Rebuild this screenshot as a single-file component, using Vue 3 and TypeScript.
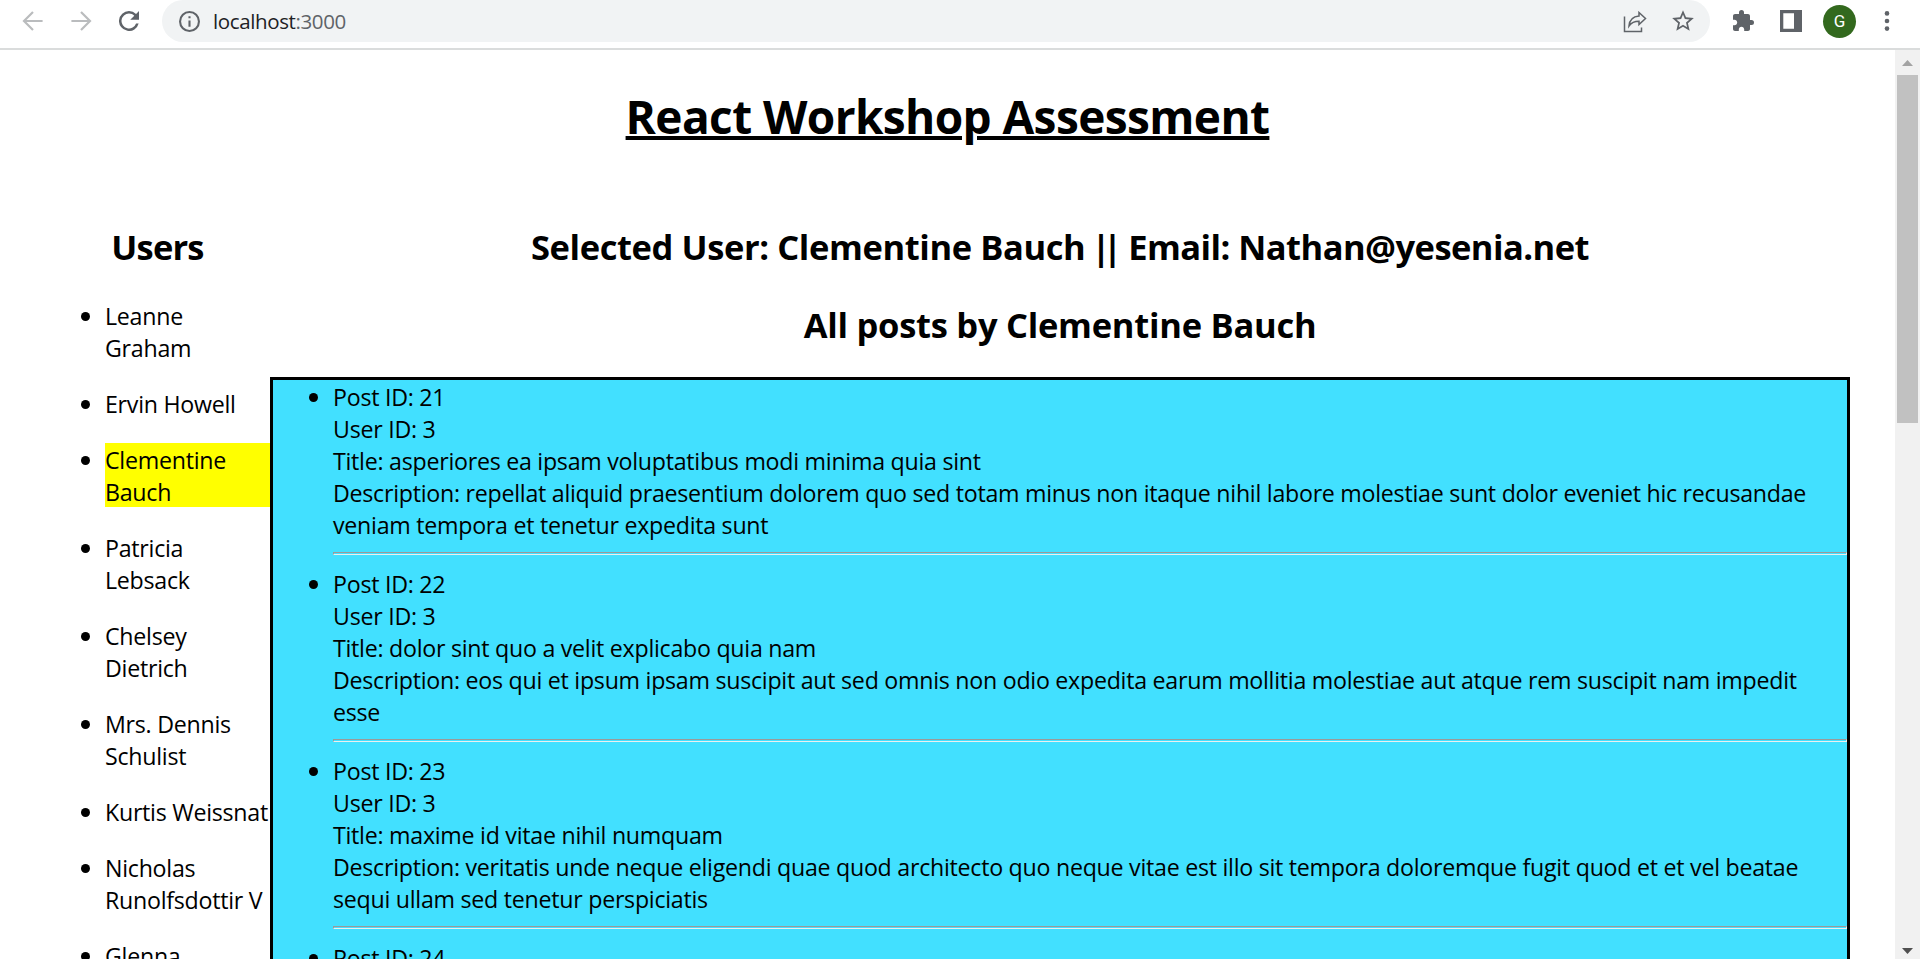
<script setup lang="ts">
interface User {
  id: number
  name: string
}

interface Post {
  id: number
  userId: number
  title: string
  body: string
}

const users: User[] = [
  { id: 1, name: 'Leanne Graham' },
  { id: 2, name: 'Ervin Howell' },
  { id: 3, name: 'Clementine Bauch' },
  { id: 4, name: 'Patricia Lebsack' },
  { id: 5, name: 'Chelsey Dietrich' },
  { id: 6, name: 'Mrs. Dennis Schulist' },
  { id: 7, name: 'Kurtis Weissnat' },
  { id: 8, name: 'Nicholas Runolfsdottir V' },
  { id: 9, name: 'Glenna Reichert' },
]

const selected = { id: 3, name: 'Clementine Bauch', email: 'Nathan@yesenia.net' }

const posts: Post[] = [
  {
    id: 21,
    userId: 3,
    title: 'asperiores ea ipsam voluptatibus modi minima quia sint',
    body: 'repellat aliquid praesentium dolorem quo sed totam minus non itaque nihil labore molestiae sunt dolor eveniet hic recusandae veniam tempora et tenetur expedita sunt',
  },
  {
    id: 22,
    userId: 3,
    title: 'dolor sint quo a velit explicabo quia nam',
    body: 'eos qui et ipsum ipsam suscipit aut sed omnis non odio expedita earum mollitia molestiae aut atque rem suscipit nam impedit esse',
  },
  {
    id: 23,
    userId: 3,
    title: 'maxime id vitae nihil numquam',
    body: 'veritatis unde neque eligendi quae quod architecto quo neque vitae est illo sit tempora doloremque fugit quod et et vel beatae sequi ullam sed tenetur perspiciatis',
  },
  {
    id: 24,
    userId: 3,
    title: 'autem hic labore sunt dolores incidunt',
    body: 'enim et ex nulla omnis voluptas quia qui voluptatem consequatur numquam aliquam sunt totam recusandae id dignissimos aut sed asperiores deserunt',
  },
]
</script>

<template>
  <div class="window">
    <header class="toolbar">
      <svg class="nav" viewBox="0 0 24 24"><path d="M21.6 12H3M12 3L3 12l9 9" /></svg>
      <svg class="nav" viewBox="0 0 24 24"><path d="M2.4 12H21M12 3l9 9-9 9" /></svg>
      <svg class="reload" viewBox="0 0 16 16">
        <path d="M13.65 2.35A7.96 7.96 0 0 0 8 0a8 8 0 1 0 7.73 10h-2.08A6 6 0 1 1 8 2c1.66 0 3.14.69 4.22 1.78L9 7h7V0z" />
      </svg>
      <div class="address">
        <svg class="info" viewBox="0 0 20 20">
          <path d="M9 5h2v2H9zm0 4h2v6H9zm1-9a10 10 0 1 0 0 20 10 10 0 0 0 0-20zm0 18a8 8 0 1 1 0-16 8 8 0 0 1 0 16z" />
        </svg>
        <span class="url">localhost<span class="port">:3000</span></span>
        <svg class="share" viewBox="0 0 24 22">
          <path d="M1.500 5.500v15h17v-4" />
          <path d="M16 1.500l6.500 6-6.500 6V10.300c-4.500 0-7.500 1.200-10 4.700.500-6 4-9.500 10-10z" />
        </svg>
        <svg class="star" viewBox="0 0 24 24">
          <path d="M22 9.240l-7.190-.620L12 2 9.190 8.630 2 9.240l5.460 4.730L5.820 21 12 17.270 18.180 21l-1.630-7.030L22 9.240zM12 15.400l-3.760 2.270 1-4.280-3.320-2.880 4.380-.380L12 6.100l1.710 4.040 4.380.380-3.320 2.880 1 4.280L12 15.400z" />
        </svg>
      </div>
      <svg class="puzzle" viewBox="0 0 24 24">
        <path d="M20.500 11H19V7c0-1.100-.900-2-2-2h-4V3.500a2.500 2.500 0 0 0-5 0V5H4c-1.100 0-1.990.900-1.990 2v3.800H3.500c1.490 0 2.700 1.210 2.700 2.700s-1.210 2.700-2.700 2.700H2V20c0 1.100.900 2 2 2h3.800v-1.500c0-1.490 1.210-2.700 2.700-2.700s2.700 1.210 2.700 2.700V22H17c1.100 0 2-.900 2-2v-4h1.500a2.500 2.500 0 0 0 0-5z" />
      </svg>
      <svg class="panel" viewBox="0 0 22 22"><path d="M0 0h22v22H0zM3.300 3.300v15.400H14V3.300z" fill-rule="evenodd" /></svg>
      <span class="avatar">G</span>
      <svg class="kebab" viewBox="0 0 6 20">
        <circle cx="3" cy="2.400" r="2.300" /><circle cx="3" cy="10" r="2.300" /><circle cx="3" cy="17.600" r="2.300" />
      </svg>
    </header>

    <div class="viewport">
      <main class="page">
        <h1>React Workshop Assessment</h1>
        <div class="columns">
          <aside class="sidebar">
            <h2 class="heading">Users</h2>
            <ul class="users">
              <li v-for="user in users" :key="user.id" :class="{ active: user.id === selected.id }">{{ user.name }}</li>
            </ul>
          </aside>
          <section class="content">
            <h2>Selected User: {{ selected.name }} <span class="divider">||</span> <span class="email">Email: {{ selected.email }}</span></h2>
            <h2 class="subtitle">All posts by {{ selected.name }}</h2>
            <ul class="posts">
              <li v-for="post in posts" :key="post.id">
                <div>Post ID: {{ post.id }}</div>
                <div>User ID: {{ post.userId }}</div>
                <div>Title: {{ post.title }}</div>
                <div>Description: {{ post.body }}</div>
                <hr />
              </li>
            </ul>
          </section>
        </div>
      </main>
      <div class="scrollbar">
        <svg class="arrow up" viewBox="0 0 11 6"><path d="M0 6L5.500 0 11 6z" /></svg>
        <div class="thumb"></div>
        <svg class="arrow down" viewBox="0 0 11 6"><path d="M0 0h11L5.500 6z" /></svg>
      </div>
    </div>
  </div>
</template>

<style>
body {
  margin: 0;
  overflow: hidden;
  background: #fff;
}
</style>

<style scoped>
.window {
  display: flex;
  flex-direction: column;
  height: 959px;
  overflow: hidden;
  font-family: "Open Sans", "Noto Sans", sans-serif;
  color: #000;
}
.toolbar {
  display: flex;
  flex: none;
  align-items: flex-start;
  box-sizing: border-box;
  height: 50px;
  padding-left: 21px;
  border-bottom: 2px solid #dadcdc;
}
.toolbar svg {
  display: block;
  flex: none;
  fill: #5f6368;
}
.toolbar .nav {
  width: 24px;
  height: 24px;
  margin: 9px 24px 0 0;
  fill: none;
  stroke: #babcbe;
  stroke-width: 2.2;
}
.toolbar .reload {
  width: 20px;
  height: 20px;
  margin: 11px 23px 0 2px;
}
.address {
  display: flex;
  align-items: flex-start;
  box-sizing: border-box;
  width: 1548px;
  height: 42px;
  padding-left: 17px;
  border-radius: 21px;
  background: #f1f3f4;
}
.info {
  width: 21px;
  height: 21px;
  margin-top: 11px;
}
.url {
  flex: 1;
  margin-left: 13px;
  font-size: 20.5px;
  line-height: 42px;
  letter-spacing: -0.38px;
  color: #202124;
}
.port {
  color: #5f6368;
}
.toolbar .share {
  width: 24px;
  height: 22px;
  margin: 10.5px 23px 0 0;
  fill: none;
  stroke: #5f6368;
  stroke-width: 1.5;
}
.toolbar .star {
  width: 26px;
  height: 26px;
  margin: 8px 14px 0 0;
}
.puzzle {
  width: 24px;
  height: 24px;
  margin: 9px 0 0 21px;
}
.panel {
  width: 22px;
  height: 22px;
  margin: 10px 0 0 25px;
}
.avatar {
  width: 33px;
  height: 33px;
  margin: 5px 0 0 21px;
  border-radius: 50%;
  background: #33691e;
  color: #fff;
  font: 400 17px/33px Roboto, sans-serif;
  text-align: center;
}
.kebab {
  width: 6px;
  height: 20px;
  margin: 11px 0 0 28px;
}
.viewport {
  display: flex;
  flex: 1;
  min-height: 0;
}
.page {
  flex: 1;
  overflow: hidden;
  padding: 32px 45px 0;
}
h1,
h2 {
  margin: 0;
  font-weight: 700;
  text-align: center;
  white-space: nowrap;
}
h1 {
  height: 64px;
  font-size: 46px;
  line-height: 69px;
  letter-spacing: -0.6px;
  text-decoration: underline;
  text-decoration-thickness: 4px;
}
h2 {
  height: 48px;
  margin-bottom: 30px;
  font-size: 34.5px;
  line-height: 51px;
  letter-spacing: -0.4px;
}
.heading {
  letter-spacing: -0.8px;
}
.divider {
  margin: 0 5.2px 0 -2.5px;
  letter-spacing: -7.5px;
}
.email {
  letter-spacing: -0.54px;
}
.subtitle {
  letter-spacing: -0.26px;
}
.columns {
  display: flex;
  margin-top: 75px;
}
.sidebar {
  width: 225px;
}
.content {
  width: 1580px;
}
ul {
  margin: 0;
  padding: 0 0 0 60px;
  list-style: none;
  font-size: 23.2px;
  line-height: 32px;
  letter-spacing: -0.26px;
}
li {
  position: relative;
}
li::before {
  content: "";
  position: absolute;
  top: 13px;
  left: -24px;
  width: 9px;
  height: 9px;
  border-radius: 50%;
  background: #000;
}
.users li {
  margin-bottom: 23px;
  padding-top: 1px;
}
.users .active {
  background: linear-gradient(#ff0, #ff0) 0 0 / 100% calc(100% - 1px) no-repeat;
}
.posts {
  padding-top: 1px;
  border: 3px solid #000;
  background: #42e0ff;
}
.posts li::before {
  top: 12px;
}
.posts hr {
  box-sizing: border-box;
  height: 3px;
  margin: 11px 0 13px;
  border: 1px solid;
  border-color: #9a9a9a #eee #eee #9a9a9a;
}
.scrollbar {
  display: flex;
  flex-direction: column;
  align-items: center;
  width: 25px;
  background: #f1f1f1;
}
.arrow {
  width: 11px;
  height: 6px;
}
.up {
  margin-top: 10px;
  fill: #a3a3a3;
}
.thumb {
  width: 21px;
  height: 348px;
  margin-top: 9px;
  background: #c1c1c1;
}
.down {
  margin: auto 0 5px;
  fill: #505050;
}
</style>
